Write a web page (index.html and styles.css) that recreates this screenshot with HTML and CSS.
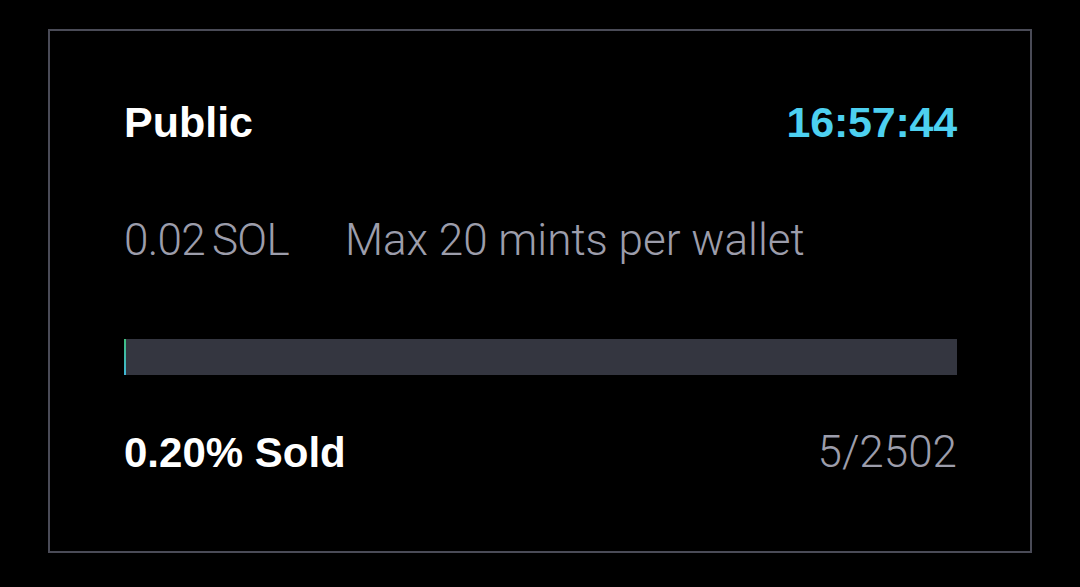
FILE: index.html
```html
<!DOCTYPE html>
<html>
<head>
<meta charset="utf-8">
<link rel="stylesheet" href="styles.css">
</head>
<body>
<div class="card">
  <div class="row head">
    <span class="title">Public</span>
    <span class="timer">16:57:44</span>
  </div>
  <div class="row info">
    <span class="price">0.02 SOL</span>
    <span class="limit">Max 20 mints per wallet</span>
  </div>
  <div class="bar"><div class="fill" style="width:0.2%"></div></div>
  <div class="row foot">
    <span class="sold">0.20% Sold</span>
    <span class="count">5/2502</span>
  </div>
</div>
</body>
</html>
```
FILE: styles.css
```css
html, body {
  margin: 0;
  padding: 0;
  background: #000;
}
body {
  font-family: "Liberation Sans", Arial, sans-serif;
  padding: 29px 0 0 48px;
}
.card {
  box-sizing: border-box;
  width: 984px;
  height: 524px;
  border: 2px solid #4a4b57;
  padding: 67px 73px 0 74px;
}
.row {
  display: flex;
  justify-content: space-between;
  align-items: baseline;
  line-height: 48px;
}
.title, .timer, .sold {
  font-family: "Liberation Sans", Arial, sans-serif;
  font-weight: 700;
  font-size: 43px;
  color: #fff;
}
.timer {
  color: #4dd0f0;
  letter-spacing: -0.2px;
}
.sold {
  font-size: 42px;
}
.info {
  margin-top: 70px;
  justify-content: flex-start;
  gap: 56px;
}
.price, .limit, .count {
  font-family: Roboto, "Liberation Sans", sans-serif;
  color: #9c9dab;
  font-size: 44px;
  font-weight: 300;
}
.price {
  letter-spacing: -0.7px;
  word-spacing: -3px;
}
.bar {
  margin-top: 75px;
  height: 36px;
  background: #343640;
}
.fill {
  height: 100%;
  min-width: 2px;
  background: linear-gradient(#3fbf7f, #3fb7d8);
}
.foot {
  margin-top: 53px;
}
```
